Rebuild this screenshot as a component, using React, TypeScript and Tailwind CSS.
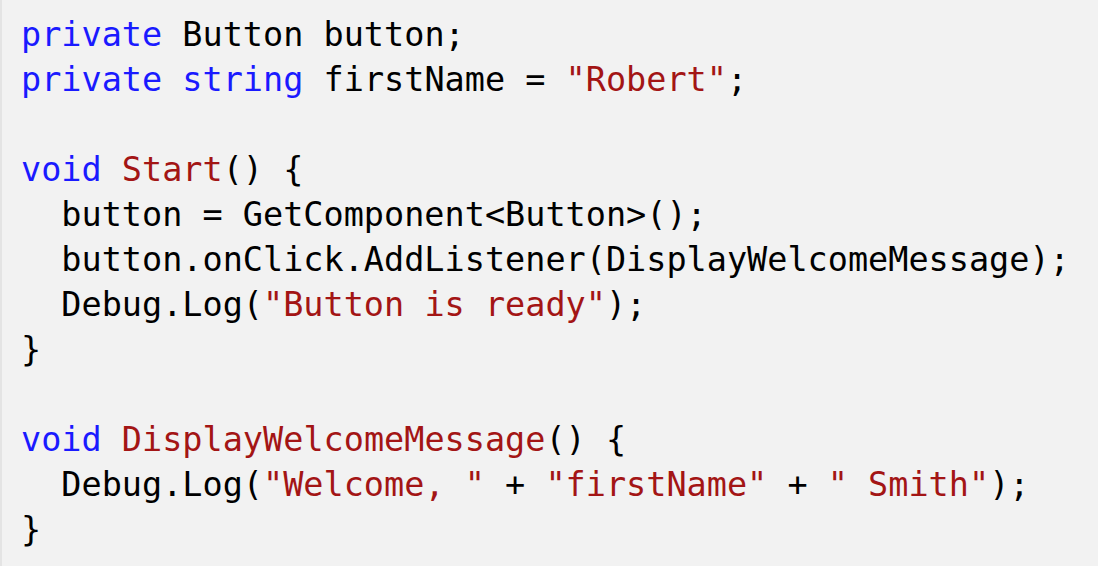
import React from "react";

type Tok = [string, "k" | "s" | "t"];

const lines: Tok[][] = [
	[["private", "k"], [" Button button;", "t"]],
	[["private", "k"], [" ", "t"], ["string", "k"], [" firstName = ", "t"], ['"Robert"', "s"], [";", "t"]],
	[],
	[["void", "k"], [" ", "t"], ["Start", "s"], ["() {", "t"]],
	[["  button = GetComponent<Button>();", "t"]],
	[["  button.onClick.AddListener(DisplayWelcomeMessage);", "t"]],
	[["  Debug.Log(", "t"], ['"Button is ready"', "s"], [");", "t"]],
	[["}", "t"]],
	[],
	[["void", "k"], [" ", "t"], ["DisplayWelcomeMessage", "s"], ["() {", "t"]],
	[
		["  Debug.Log(", "t"],
		['"Welcome, "', "s"],
		[" + ", "t"],
		['"firstName"', "s"],
		[" + ", "t"],
		['" Smith"', "s"],
		[");", "t"],
	],
	[["}", "t"]],
];

const colorFor = (kind: Tok[1]) =>
	kind === "k" ? "text-[#1a1aff]" : kind === "s" ? "text-[#a31515]" : "text-black";

export default function App() {
	return (
		<div className="w-[1098px] h-[566px] bg-[#f2f2f2] border-l-2 border-[#e4e4e4] overflow-hidden">
			<pre
				className="pl-[19px] pt-[12px] text-[33.5px] leading-[45px] whitespace-pre"
				style={{ fontFamily: '"DejaVu Sans Mono", "Liberation Mono", monospace' }}>
				{lines.map((line, i) => (
					<div key={i} className="h-[45px]">
						{line.map(([text, kind], j) => (
							<span key={j} className={colorFor(kind)}>
								{text}
							</span>
						))}
					</div>
				))}
			</pre>
		</div>
	);
}
